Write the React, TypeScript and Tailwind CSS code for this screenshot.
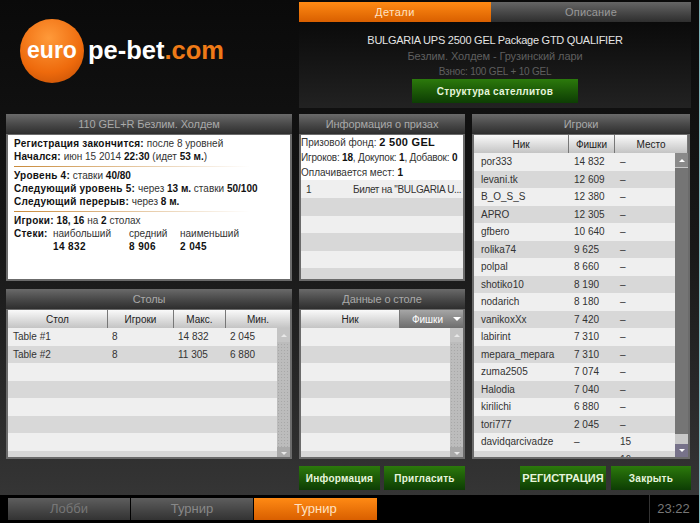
import React from 'react';

const font = "font-['Liberation_Sans',Arial,sans-serif]";

const headBar = 'h-5 shrink-0 flex items-center justify-center bg-gradient-to-b from-[#6a6a6a] via-[#4a4a4a] to-[#2e2e2e] text-[#a9a9a9] text-[11px] tracking-[-0.1px]';
const colHead = 'h-[18px] shrink-0 flex items-center justify-center text-[10px] text-[#222] border-r border-[#777] bg-gradient-to-b from-[#fafafa] to-[#c4c4c4]';
const greenBtn = 'h-[24px] flex items-center justify-center bg-gradient-to-b from-[#2c7a0c] to-[#0d3d04] font-bold text-[10px] tracking-[0.25px] text-[#e6f5dc]';
const frame = 'flex-1 min-h-0 border-x-2 border-t border-b-2 border-[#6b6b6b] bg-white overflow-hidden';

const Panel: React.FC<{ title: string; className: string; children: React.ReactNode }> = ({ title, className, children }) => (
  <div className={`flex flex-col ${className}`}>
    <div className={headBar}>{title}</div>
    <div className={frame}>{children}</div>
  </div>
);

const Scrollbar: React.FC<{ active?: boolean }> = ({ active }) => (
  <div className={`w-[13px] shrink-0 flex flex-col ${active ? 'bg-[#c8c8c8]' : 'bg-[#bcbcbc] bg-[radial-gradient(#a8a8a8_1px,transparent_1px)] bg-[length:3px_3px]'}`}>
    <div className={`h-[14px] shrink-0 flex items-center justify-center ${active ? 'bg-[#8a8a8a]' : 'bg-[#c4c4c4]'}`}>
      <div className={`w-0 h-0 border-x-[3px] border-x-transparent border-b-[3px] ${active ? 'border-b-white' : 'border-b-[#e8e8e8]'}`} />
    </div>
    {active ? <div className="h-[266px] shrink-0 mt-px bg-[#757575]" /> : null}
    <div className="flex-1" />
    <div className={`h-[13px] shrink-0 flex items-center justify-center ${active ? 'bg-[#77728a]' : 'bg-[#a9a9a9]'}`}>
      <div className={`w-0 h-0 border-x-[3px] border-x-transparent border-t-[3px] ${active ? 'border-t-white' : 'border-t-[#e8e8e8]'}`} />
    </div>
  </div>
);

const players = [
  ['por333', '14 832', '–'], ['levani.tk', '12 609', '–'], ['B_O_S_S', '12 380', '–'], ['APRO', '12 305', '–'],
  ['gfbero', '10 640', '–'], ['rolika74', '9 625', '–'], ['polpal', '8 660', '–'], ['shotiko10', '8 190', '–'],
  ['nodarich', '8 180', '–'], ['vanikoxXx', '7 420', '–'], ['labirint', '7 310', '–'], ['mepara_mepara', '7 310', '–'],
  ['zuma2505', '7 074', '–'], ['Halodia', '7 040', '–'], ['kirilichi', '6 880', '–'], ['tori777', '2 045', '–'],
  ['davidqarcivadze', '–', '15'], ['', '', '16'],
];

const Sep = () => <div className="h-px mt-[3px] mb-[2px] w-[236px] bg-gradient-to-r from-[#c98a3a] to-transparent" />;

export default function App() {
  return (
    <div className={`relative w-[700px] h-[523px] overflow-hidden bg-black flex flex-col ${font}`}>
      <div className="h-[495px] shrink-0 bg-gradient-to-b from-[#0a0a0a] via-[#181818] to-[#353535] flex flex-col">
        <div className="h-[114px] shrink-0 flex">
          <div className="w-[299px] shrink-0 pt-[19px] pl-[20px]">
            <div className="flex items-center h-[64px]">
              <div className="w-[64px] h-[64px] rounded-full bg-[radial-gradient(circle_at_45%_30%,#ff9a3a,#ee6a0c_60%,#b94a05)] flex items-center justify-center text-white font-bold text-[23px] pb-[1px]">euro</div>
              <div className="ml-[4px] pb-[1px] font-bold text-[25.5px] text-white">pe-bet<span className="text-[#ef7a17]">.com</span></div>
            </div>
          </div>
          <div className="w-[392px] h-[106px] mt-[2px] flex flex-col bg-gradient-to-b from-[#060606] to-[#222]">
            <div className="flex h-5 shrink-0 text-[11px]">
              <div className="w-[192px] flex items-center justify-center tracking-[0.5px] bg-gradient-to-b from-[#ff8a14] to-[#d95f00] text-[#ffe2c4]">Детали</div>
              <div className="flex-1 flex items-center justify-center tracking-[0.15px] bg-gradient-to-b from-[#666] to-[#2e2e2e] text-[#999]">Описание</div>
            </div>
            <div className="flex flex-col items-center pt-[10px]">
              <div className="text-[11px] leading-[16px] tracking-[-0.25px] text-[#e4e4e4]">BULGARIA UPS 2500 GEL Package GTD QUALIFIER</div>
              <div className="text-[11px] leading-[16px] tracking-[-0.1px] text-[#5f5f5f]">Безлим. Холдем - Грузинский лари</div>
              <div className="text-[10px] leading-[14px] mt-[1px] tracking-[-0.2px] text-[#5f5f5f]">Взнос: 100 GEL + 10 GEL</div>
              <div className={`${greenBtn} w-[166px]`}>Структура сателлитов</div>
            </div>
          </div>
        </div>

        <div className="h-[167px] shrink-0 flex">
          <Panel title="110 GEL+R Безлим. Холдем" className="w-[286px] ml-[6px] h-[167px]">
            <div className="pl-[6px] pt-[2px] text-[10px] leading-[13px] text-[#333]">
              <div><b className="tracking-[0.25px] text-[#111]">Регистрация закончится:</b> после 8 уровней</div>
              <div><b className="tracking-[0.25px] text-[#111]">Начался:</b> июн 15 2014 <b className="text-[#111]">22:30</b> (идет <b className="text-[#111]">53 м.</b>)</div>
              <Sep />
              <div><b className="tracking-[0.25px] text-[#111]">Уровень 4:</b> ставки <b className="text-[#111]">40/80</b></div>
              <div><b className="tracking-[0.25px] text-[#111]">Следующий уровень 5:</b> через <b className="text-[#111]">13 м.</b> ставки <b className="text-[#111]">50/100</b></div>
              <div><b className="tracking-[0.25px] text-[#111]">Следующий перерыв:</b> через <b className="text-[#111]">8 м.</b></div>
              <Sep />
              <div><b className="tracking-[0.25px] text-[#111]">Игроки:</b> <b className="text-[#111]">18, 16</b> на <b className="text-[#111]">2</b> столах</div>
              <div className="flex">
                <b className="w-[39px] tracking-[0.25px] text-[#111]">Стеки:</b>
                <div className="w-[76px]">наибольший<div className="font-bold tracking-[0.4px] text-[#111]">14 832</div></div>
                <div className="w-[51px]">средний<div className="font-bold tracking-[0.4px] text-[#111]">8 906</div></div>
                <div>наименьший<div className="font-bold tracking-[0.4px] text-[#111]">2 045</div></div>
              </div>
            </div>
          </Panel>
          <Panel title="Информация о призах" className="w-[166px] ml-[7px] h-[167px]">
            <div className="text-[10px] leading-[15px] text-[#333] h-[45px] whitespace-nowrap">
              <div>Призовой фонд: <b className="text-[11px] tracking-[0.3px] text-[#111]">2 500 GEL</b></div>
              <div className="tracking-[-0.2px]">Игроков: <b className="text-[#111]">18</b>, Докупок: <b className="text-[#111]">1</b>, Добавок: <b className="text-[#111]">0</b></div>
              <div>Оплачивается мест: <b className="text-[#111]">1</b></div>
            </div>
            <div className="h-[18px] bg-[#efefef] flex items-center text-[10px] tracking-[-0.35px] text-[#333] whitespace-nowrap">
              <div className="w-[52px] pl-[5px] shrink-0">1</div><div>Билет на "BULGARIA U...</div>
            </div>
            {[0, 1, 2, 3, 4].map((i) => (
              <div key={i} className={`h-[17.5px] ${i % 2 === 0 ? 'bg-[#d8d8d8]' : 'bg-[#efefef]'}`} />
            ))}
          </Panel>
          <div className="w-[7px]" />
          <div className="w-[218px] h-[345px] flex flex-col">
            <div className={headBar}>Игроки</div>
            <div className={`${frame} flex flex-col`}>
              <div className="flex shrink-0">
                <div className={`${colHead} w-[95px]`}>Ник</div>
                <div className={`${colHead} w-[46px]`}>Фишки</div>
                <div className={`${colHead} flex-1`}>Место</div>
              </div>
              <div className="flex-1 min-h-0 flex overflow-hidden">
                <div className="flex-1 min-w-0">
                  {players.map((p, i) => (
                    <div key={i} className={`h-[17.5px] flex items-center text-[10px] text-[#333] ${i % 2 === 0 ? 'bg-[#efefef]' : 'bg-[#d8d8d8]'}`}>
                      <div className="w-[100px] pl-[7px] shrink-0">{p[0]}</div>
                      <div className="w-[46px] shrink-0">{p[1]}</div>
                      <div>{p[2]}</div>
                    </div>
                  ))}
                </div>
                <Scrollbar active />
              </div>
            </div>
          </div>
        </div>
        <div className="flex h-[178px] pt-[8px] shrink-0">
          <Panel title="Столы" className="w-[286px] ml-[6px] h-[170px]">
            <div className="flex">
              <div className={`${colHead} w-[100px]`}>Стол</div>
              <div className={`${colHead} w-[66px]`}>Игроки</div>
              <div className={`${colHead} w-[52px]`}>Макс.</div>
              <div className={`${colHead} flex-1 border-r-0`}>Мин.</div>
            </div>
            <div className="flex h-[132px]">
              <div className="flex-1 overflow-hidden">
                {[['Table #1', '8', '14 832', '2 045'], ['Table #2', '8', '11 305', '6 880']].map((r, i) => (
                  <div key={i} className={`h-[17.5px] flex items-center text-[10px] text-[#333] ${i % 2 === 0 ? 'bg-[#efefef]' : 'bg-[#d8d8d8]'}`}>
                    <div className="w-[104px] pl-[5px]">{r[0]}</div>
                    <div className="w-[66px]">{r[1]}</div>
                    <div className="w-[52px]">{r[2]}</div>
                    <div>{r[3]}</div>
                  </div>
                ))}
                {[0, 1, 2, 3, 4, 5].map((i) => (
                  <div key={i} className={`h-[17.5px] ${i % 2 === 0 ? 'bg-[#efefef]' : 'bg-[#d8d8d8]'}`} />
                ))}
              </div>
              <Scrollbar />
            </div>
          </Panel>
          <Panel title="Данные о столе" className="w-[166px] ml-[7px] h-[170px]">
            <div className="flex">
              <div className={`${colHead} w-[99px]`}>Ник</div>
              <div className="h-[18px] flex-1 flex items-center justify-center gap-[10px] pl-[10px] text-[10px] text-white bg-gradient-to-b from-[#a6a6a6] to-[#6d6d6d]">
                Фишки
                <div className="w-0 h-0 border-x-[4px] border-x-transparent border-t-[4px] border-t-white" />
              </div>
            </div>
            <div className="flex h-[132px]">
              <div className="flex-1 overflow-hidden">
                {[0, 1, 2, 3, 4, 5, 6, 7].map((i) => (
                  <div key={i} className={`h-[17.5px] ${i % 2 === 0 ? 'bg-[#efefef]' : 'bg-[#d8d8d8]'}`} />
                ))}
              </div>
              <Scrollbar />
            </div>
          </Panel>
        </div>
        <div className="flex pt-[7px]">
          <div className={`${greenBtn} ml-[299px] w-[81px]`}>Информация</div>
          <div className={`${greenBtn} ml-[4px] w-[81px]`}>Пригласить</div>
          <div className={`${greenBtn} ml-[55px] w-[86px] text-[11px] tracking-normal`}>РЕГИСТРАЦИЯ</div>
          <div className={`${greenBtn} ml-[5px] w-[80px]`}>Закрыть</div>
        </div>
      </div>
      <div className="flex-1 flex pl-[8px] pt-[3px] pb-[3px] gap-px text-[13px]">
        <div className="w-[122px] flex items-center justify-center bg-gradient-to-b from-[#5e5e5e] to-[#333] text-[#777]">Лобби</div>
        <div className="w-[122px] flex items-center justify-center bg-gradient-to-b from-[#5e5e5e] to-[#333] text-[#888]">Турнир</div>
        <div className="w-[123px] flex items-center justify-center bg-gradient-to-b from-[#ff8a14] to-[#d95f00] text-[#ffe2c4]">Турнир</div>
        <div className="flex-1" />
        <div className="w-[51px] border-l border-[#333] -my-[3px] pr-[3px] flex items-center justify-center text-[13px] text-[#777]">23:22</div>
      </div>
      <div className="absolute right-0 top-0 bottom-0 w-px bg-[#7fb8bd]" />
    </div>
  );
}
